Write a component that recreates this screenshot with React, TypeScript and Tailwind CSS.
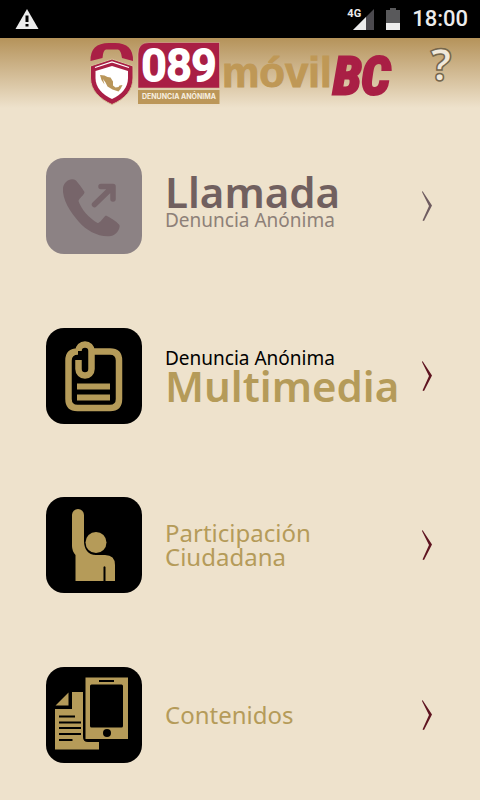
import { type ReactNode } from 'react'

type MenuItemType = {
  id: string
  icon: ReactNode
  label: ReactNode
  tileClass: string
  arrowClass: string
  disabled?: boolean
}

const PhoneIcon = () => (
  <svg viewBox="0 0 96 96" className="size-full" aria-hidden="true">
    <path
      d="M20 24C23 21 27 20.500 30 22.500C33 26 36 30 38.500 34C38.500 37 33 40 32.500 43C35 51 43 60 51.500 65C54 65.500 57 59.500 60 57.500C64 59.500 70 63 73.500 67C74.500 71 70 77 65 78C53 79.500 41 73 33 64C24 54 16 41 17 30C17.300 27.500 18.300 25.500 20 24Z"
      fill="currentColor"
    />
    <path
      d="M48.500 46.500L66 29.500M55 28.500H67V41"
      fill="none"
      stroke="currentColor"
      strokeWidth="5.500"
      strokeLinecap="round"
      strokeLinejoin="round"
    />
  </svg>
)

const ClipIcon = () => (
  <svg viewBox="0 0 96 96" className="size-full" aria-hidden="true">
    <g fill="none" stroke="currentColor" strokeWidth="6.500">
      <path d="M46 23.500H64Q73 23.500 73 32.500V71Q73 80 64 80H31.500Q22.500 80 22.500 71V32.500Q22.500 23.500 32 23.500" />
      <path d="M32.500 32V41A6.500 6.500 0 0 0 45.500 41V23A6.500 6.500 0 0 0 32.500 23" />
    </g>
    <path d="M31 55.500H64V61.500H31ZM31 66.500H64V72.500H31Z" fill="currentColor" />
  </svg>
)

const RaisedHandIcon = () => (
  <svg viewBox="0 0 96 96" className="size-full" aria-hidden="true">
    <path
      d="M26 18A6 6 0 0 1 38 18V44C38 52 42 58 50 58H59Q69 58 69 68V84H59.500V70Q58.500 68.500 57.500 70V84H29.500V58Q26 54 26 49Z"
      fill="currentColor"
    />
    <circle cx="50" cy="45.500" r="10.500" fill="currentColor" />
  </svg>
)

const DocumentsIcon = () => (
  <svg viewBox="0 0 96 96" className="size-full" aria-hidden="true">
    <path
      d="M22.500 25.500V38.500H9.500ZM26 25H37V70Q37 75 42 75H53V82.500H9V42H26Z"
      fill="currentColor"
    />
    <path
      d="M13 49.500H29M13 55.500H35M13 61H35M13 67H35M13 73H26.500"
      stroke="#000"
      strokeWidth="2"
    />
    <path d="M39.500 10.500H82V72H39.500Z" fill="currentColor" />
    <rect x="44" y="17.500" width="33" height="43" rx="1.500" fill="#000" />
    <path d="M53 14H68" stroke="#000" strokeWidth="2" />
    <circle cx="61" cy="66" r="4" fill="#000" />
  </svg>
)

const menuItems: MenuItemType[] = [
  {
    id: 'call',
    icon: <PhoneIcon />,
    tileClass: 'bg-[#8c8284] text-[#77656a]',
    arrowClass: 'text-[#6f5c60]',
    disabled: true,
    label: (
      <>
        <span className="text-[42px] leading-[36px] font-semibold text-[#71605f]">
          Llamada
        </span>
        <span className="pb-2 text-[19px] leading-[20px] text-[#8d8078]">
          Denuncia Anónima
        </span>
      </>
    ),
  },
  {
    id: 'multimedia',
    icon: <ClipIcon />,
    tileClass: 'bg-black text-[#b59b59]',
    arrowClass: 'text-[#5f1420]',
    label: (
      <>
        <span className="text-[19px] leading-[20px] text-black">
          Denuncia Anónima
        </span>
        <span className="text-[42px] leading-[36px] font-semibold text-[#b59b59]">
          Multimedia
        </span>
      </>
    ),
  },
  {
    id: 'participation',
    icon: <RaisedHandIcon />,
    tileClass: 'bg-black text-[#b59b59]',
    arrowClass: 'text-[#5f1420]',
    label: (
      <span className="text-[24px] leading-[24px] text-[#b59b59]">
        Participación
        <br />
        Ciudadana
      </span>
    ),
  },
  {
    id: 'contents',
    icon: <DocumentsIcon />,
    tileClass: 'bg-black text-[#b59b59]',
    arrowClass: 'text-[#5f1420]',
    label: (
      <span className="text-[24px] leading-[24px] text-[#b59b59]">
        Contenidos
      </span>
    ),
  },
]

const StatusBar = () => (
  <div className="flex h-[38px] items-center justify-between bg-black pr-3 pl-[15px] font-[Roboto,sans-serif]">
    <svg viewBox="0 0 24 22" className="h-[22px] w-6" aria-hidden="true">
      <path d="M12 1L23.500 21H0.500Z" fill="#ececec" />
      <path d="M10.500 7.500H13.500V14H10.500ZM10.500 16H13.500V18.500H10.500Z" fill="#000" />
    </svg>
    <div className="flex items-center gap-3">
      <div className="flex items-start">
        <span className="text-[11px] leading-[10px] font-bold text-[#ececec]">
          4G
        </span>
        <svg viewBox="0 0 21 21" className="-ml-2 size-[21px]" aria-hidden="true">
          <path d="M0 21L21 0V21Z" fill="#4b494e" />
          <path d="M0 21L13 8V21Z" fill="#ececec" />
        </svg>
      </div>
      <svg viewBox="0 0 14 22" className="h-[22px] w-[14px]" aria-hidden="true">
        <path d="M0 2H4V0H10V2H14V22H0Z" fill="#59595b" />
        <path d="M0 15H14V22H0Z" fill="#ececec" />
      </svg>
      <span className="text-[22px] leading-[26px] font-medium text-[#ececec]">
        18:00
      </span>
    </div>
  </div>
)

const Logo = () => (
  <svg
    viewBox="0 0 304 64"
    className="h-16 w-[304px] overflow-visible"
    role="img"
    aria-label="089 móvil BC"
  >
    {/* handset and shield */}
    <path
      d="M0.500 19Q0 1 19 1H25Q43.500 1 43 19L32 16Q31 8 28 7.500H16Q13 8 12.500 16Z"
      fill="#a91f45"
    />
    <path
      d="M22 17L43 24V36C43 48 35 57 22 62.500C9.500 57 0.500 48 0.500 36V24Z"
      fill="#a91f45"
      stroke="#d5bf95"
      strokeWidth="1"
    />
    <path
      d="M5 25.500L22 20L39 25.500"
      fill="none"
      stroke="#fff"
      strokeWidth="1.200"
    />
    <path
      d="M22 24L38 29V36C38 46 31.500 52.500 22 57C12.500 52.500 5.500 46 5.500 36V29Z"
      fill="#fff"
    />
    <path
      d="M10 33L14.500 33.500L17.500 35L20.500 35.500L23 39.500V43.500L25.500 45.500L28.500 45L29.500 43.500L32.500 43L30.500 47L28.500 49.500L22.500 47.500L17.500 44.500L15.500 40.500L13 37L14.500 42.500L11.500 38Z"
      fill="#b9965a"
    />

    <path
      d="M48 46V12Q48 0.500 59 0.500H129.500V46Z"
      fill="#a91f45"
      stroke="#dcc9a5"
      strokeWidth="0.500"
    />
    <text
      x="89"
      y="39"
      textAnchor="middle"
      className="font-[Roboto,sans-serif] text-[44px] font-medium"
      fill="#fff"
      stroke="#fff"
      strokeWidth="2"
      strokeLinejoin="round"
    >
      089
    </text>
    <path d="M48 48H129.500V62H48Z" fill="#bc9759" />
    <text
      x="89"
      y="57"
      textAnchor="middle"
      className="font-[Inter,sans-serif] text-[7px] font-bold"
      fill="#f7efe0"
    >
      DENUNCIA ANÓNIMA
    </text>

    <text
      x="132"
      y="45"
      className="font-['Liberation_Sans',sans-serif] text-[42px] font-bold"
      fill="#bf9856"
      stroke="#bf9856"
    >
      móvil
    </text>
    <text
      x="243"
      y="52"
      className="font-['Roboto_Condensed',Roboto,sans-serif] text-[52px] font-bold italic"
      fill="#a91f45"
      stroke="#a91f45"
      strokeWidth="3"
    >
      BC
    </text>
  </svg>
)

const Header = () => (
  <header className="flex h-[70px] items-start justify-end gap-8 bg-linear-to-b from-[#b5935a] to-[#eee2cc] pt-1 pr-6">
    <Logo />
    <button type="button" aria-label="Ayuda" className="mt-1">
      <svg
        viewBox="0 0 30 42"
        className="h-[42px] w-[30px] overflow-visible"
        aria-hidden="true"
      >
        <text
          x="15"
          y="35"
          textAnchor="middle"
          className="font-['Noto_Sans',sans-serif] text-[44px] font-bold"
          fill="#f0e8da"
          stroke="#75664c"
          strokeWidth="1.500"
        >
          ?
        </text>
      </svg>
    </button>
  </header>
)

const MenuRow = ({ item }: { item: MenuItemType }) => (
  <li>
    <button
      type="button"
      disabled={item.disabled}
      className="flex w-full items-center pr-[47px] pl-[46px] text-left"
    >
      <span
        className={`size-24 shrink-0 overflow-hidden rounded-[18px] ${item.tileClass}`}
      >
        {item.icon}
      </span>
      <span className="ml-[23px] flex min-w-0 flex-1 flex-col whitespace-nowrap">
        {item.label}
      </span>
      <svg
        viewBox="0 0 12 30"
        className={`h-[30px] w-3 shrink-0 ${item.arrowClass}`}
        aria-hidden="true"
      >
        <path d="M1.500 0L11 14.500L3 30L1.500 29.500L8 15L1 1Z" fill="currentColor" />
      </svg>
    </button>
  </li>
)

const App = () => {
  return (
    <div className="flex min-h-screen flex-col bg-[#eee2cc] font-['Noto_Sans',sans-serif]">
      <StatusBar />
      <Header />
      <main className="flex flex-1 flex-col">
        <ul className="flex flex-1 flex-col justify-between gap-6 pt-[50px] pb-[37px]">
          {menuItems.map((item) => (
            <MenuRow key={item.id} item={item} />
          ))}
        </ul>
      </main>
    </div>
  )
}

export default App
